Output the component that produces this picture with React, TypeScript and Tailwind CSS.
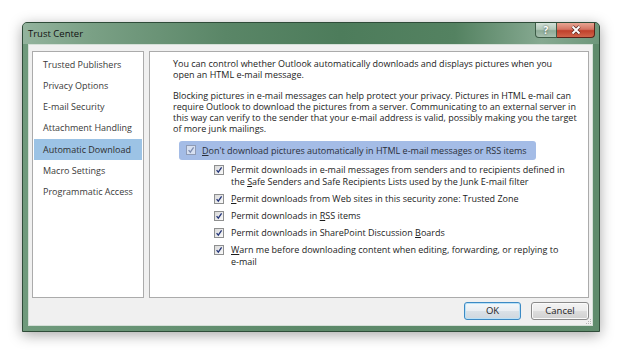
import React from "react";

function Check({ disabled }: { disabled?: boolean }) {
  return (
    <span
      className={
        disabled
          ? "relative inline-block w-[10px] h-[10px] shrink-0 border border-[#8f9bb5] bg-[#d7e0f1]"
          : "relative inline-block w-[10px] h-[10px] shrink-0 mt-[1px] border border-[#8e8f8f] bg-gradient-to-br from-[#d9d9d9] to-[#fafafa]"
      }
    >
      <svg viewBox="0 0 8 8" className="absolute inset-0 w-full h-full">
        <path
          d="M1.6 4.1 L3.3 6.1 L6.6 1.4"
          fill="none"
          stroke={disabled ? "#7d8cb0" : "#25367a"}
          strokeWidth="1.3"
        />
      </svg>
    </span>
  );
}

const navItems = [
  "Trusted Publishers",
  "Privacy Options",
  "E-mail Security",
  "Attachment Handling",
  "Automatic Download",
  "Macro Settings",
  "Programmatic Access",
];

export default function App() {
  return (
    <div className="w-[622px] h-[354px] bg-white pt-[22px] pl-[22px] font-['Open_Sans','Noto_Sans',sans-serif] text-[9px] leading-[11px]">
      <div className="w-[578px] h-[310px] flex flex-col rounded-t-[5px] border border-[#2f4c39] bg-[#5c886a] shadow-[0_3px_14px_rgba(0,0,0,0.35)]">
        {/* title bar */}
        <div className="h-[21px] flex items-start bg-[linear-gradient(90deg,#93b39d_0%,#7aa085_12%,#5a8667_35%,#4d7c5b_55%,#548261_75%,#86a991_90%,#6e977b_100%)] rounded-t-[4px]">
          <div className="pl-[5px] pt-[5px] text-[#111] text-[9.5px]">Trust Center</div>
          <div className="flex-1" />
          <div className="flex mr-[4px]">
            <div className="w-[22px] h-[15px] rounded-bl-[4px] border border-t-0 border-[#3d5c47] bg-[linear-gradient(180deg,#d3e0d7_0%,#b3c9ba_45%,#8eab97_55%,#a7c0af_100%)] flex items-center justify-center">
              <span className="text-[10px] leading-[10px] font-bold text-white [text-shadow:0_0_2px_#2a3d30]">?</span>
            </div>
            <div className="w-[38px] h-[15px] rounded-br-[4px] border border-t-0 border-l-0 border-[#5a2219] bg-[linear-gradient(180deg,#e8a593_0%,#d47563_45%,#c0402b_55%,#d0644a_100%)] flex items-center justify-center">
              <svg viewBox="0 0 12 10" className="w-[12px] h-[10px]">
                <path d="M2.5 1.5 L9.5 8.5 M9.5 1.5 L2.5 8.5" stroke="#5a2a20" strokeWidth="3.2" />
                <path d="M2.5 1.5 L9.5 8.5 M9.5 1.5 L2.5 8.5" stroke="#ffffff" strokeWidth="1.9" />
              </svg>
            </div>
          </div>
        </div>
        {/* body frame */}
        <div className="flex-1 pl-[5px] pr-[6px] pb-[5px] bg-[linear-gradient(90deg,#6f9a7c,#5b8868_50%,#5f8b6c)]">
          <div className="relative h-full border border-[#d4dfd7] bg-[#f0f0f0] pl-[3px] pr-[3px] pt-[6px] pb-[5px] flex flex-col">
            <div className="h-[247px] flex gap-[5px]">
              {/* left nav */}
              <div className="w-[112px] h-full border border-[#ababab] bg-white pt-[1.5px] px-[1px]">
                {navItems.map((n, i) => (
                  <div
                    key={n}
                    className={
                      i === 4
                        ? "h-[21.25px] flex items-center pl-[9px] bg-[#9cc3e5] text-[#2e2e2e] whitespace-nowrap"
                        : "h-[21.25px] flex items-center pl-[9px] text-[#3a3a3a] whitespace-nowrap"
                    }
                  >
                    {n}
                  </div>
                ))}
              </div>
              {/* right content */}
              <div className="w-[440px] h-full border border-[#ababab] bg-white pt-[6px] text-[#1c1c1c]">
                <p className="pl-[23px] whitespace-nowrap">
                  You can control whether Outlook automatically downloads and displays pictures when you
                  <br />
                  open an HTML e-mail message.
                </p>
                <p className="pl-[23px] mt-[10px] whitespace-nowrap">
                  Blocking pictures in e-mail messages can help protect your privacy. Pictures in HTML e-mail can
                  <br />
                  require Outlook to download the pictures from a server. Communicating to an external server in
                  <br />
                  this way can verify to the sender that your e-mail address is valid, possibly making you the target
                  <br />
                  of more junk mailings.
                </p>
                <div className="ml-[29px] mt-[6.5px] w-[357px] h-[19px] rounded-[3px] bg-[#a4bce6] flex items-center pl-[7px] gap-[6px] whitespace-nowrap text-[#2a2f3a]">
                  <Check disabled />
                  <span>
                    <u>D</u>on't download pictures automatically in HTML e-mail messages or RSS items
                  </span>
                </div>
                <div className="mt-[4px] pl-[64px] flex flex-col gap-[5px] whitespace-nowrap leading-[12px]">
                  <div className="flex items-start gap-[7px]">
                    <Check />
                    <span>
                      Permit downloads in e-mail messages from senders and to recipients defined in
                      <br />
                      the <u>S</u>afe Senders and Safe Recipients Lists used by the Junk E-mail filter
                    </span>
                  </div>
                  <div className="flex items-start gap-[7px]">
                    <Check />
                    <span>
                      <u>P</u>ermit downloads from Web sites in this security zone: Trusted Zone
                    </span>
                  </div>
                  <div className="flex items-start gap-[7px]">
                    <Check />
                    <span>
                      Permit downloads in <u>R</u>SS items
                    </span>
                  </div>
                  <div className="flex items-start gap-[7px]">
                    <Check />
                    <span>
                      Permit downloads in SharePoint Discussion <u>B</u>oards
                    </span>
                  </div>
                  <div className="flex items-start gap-[7px]">
                    <Check />
                    <span>
                      <u>W</u>arn me before downloading content when editing, forwarding, or replying to
                      <br />
                      e-mail
                    </span>
                  </div>
                </div>
              </div>
            </div>
            <div className="mt-[4px] h-[18px] flex justify-end gap-[10px]">
              <button className="w-[57px] h-[18px] rounded-[3px] border border-[#3c8ac4] bg-[linear-gradient(180deg,#f4f8fb_0%,#e9eef2_48%,#d9e1e7_52%,#cfd7de_100%)] shadow-[inset_0_0_0_1px_#b9e1f7] text-[#1c1c1c] text-[9.5px] leading-[16px]">
                OK
              </button>
              <button className="w-[58px] h-[18px] rounded-[3px] border border-[#8a8a8a] bg-[linear-gradient(180deg,#f3f3f3_0%,#ebebeb_48%,#dddddd_52%,#d0d0d0_100%)] shadow-[inset_0_0_0_1px_#fafafa] text-[#1c1c1c] text-[9.5px] leading-[16px]">
                Cancel
              </button>
            </div>
            <svg viewBox="0 0 6 6" className="absolute right-[0px] bottom-[0px] w-[6px] h-[6px]">
              <rect x="4" y="0" width="1" height="1" fill="#b5b5b5" />
              <rect x="2" y="2" width="1" height="1" fill="#b5b5b5" />
              <rect x="4" y="2" width="1" height="1" fill="#b5b5b5" />
              <rect x="0" y="4" width="1" height="1" fill="#b5b5b5" />
              <rect x="2" y="4" width="1" height="1" fill="#b5b5b5" />
              <rect x="4" y="4" width="1" height="1" fill="#b5b5b5" />
            </svg>
          </div>
        </div>
      </div>
    </div>
  );
}
